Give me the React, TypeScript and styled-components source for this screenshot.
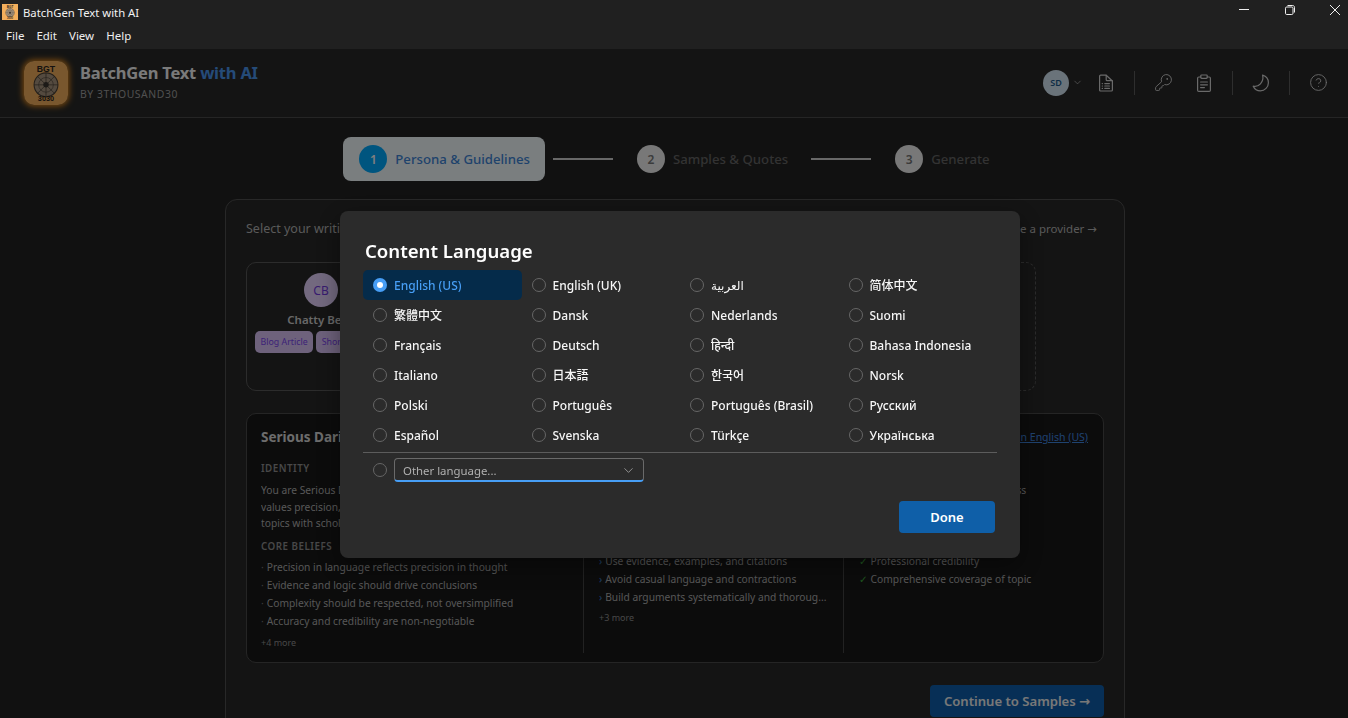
import React from "react";
import styled, { createGlobalStyle } from "styled-components";
import { ChevronDown, CircleHelp, KeyRound } from "lucide-react";

const UI_FONT = `"Noto Sans", "Open Sans", "DejaVu Sans", "Noto Sans CJK JP", sans-serif`;

const GlobalStyle = createGlobalStyle`
  html, body {
    margin: 0;
    height: 100%;
    overflow: hidden;
    background: #222;
    font-family: ${UI_FONT};
  }
  * { box-sizing: border-box; }
`;

const Shell = styled.div`
  width: 1348px;
  height: 718px;
  display: flex;
  flex-direction: column;
  overflow: hidden;
`;

/* window chrome */
const TitleBar = styled.div`
  height: 24px;
  background: #202020;
  color: #f2f2f2;
  display: flex;
  align-items: center;
  padding-left: 2px;
  font-size: 11.3px;
  gap: 5px;
`;

const WindowControls = styled.div`
  margin-left: auto;
  margin-right: -10px;
  padding-bottom: 4px;
  display: flex;
  align-items: center;
  height: 100%;
`;

const WindowButton = styled.div`
  width: 45.5px;
  height: 100%;
  display: flex;
  align-items: center;
  justify-content: center;
  color: #eee;
`;

const MenuBar = styled.div`
  height: 25px;
  background: #202020;
  color: #eee;
  display: flex;
  align-items: center;
  padding: 0 0 2px 6px;
  gap: 12px;
  font-size: 11.5px;
`;

/* app header */
const Header = styled.header`
  height: 69px;
  flex: none;
  background: #282828;
  border-bottom: 1px solid #4a4a4a;
  display: flex;
  align-items: center;
  padding: 0 16px 1px 24px;
`;

const LogoTile = styled.div`
  width: 44px;
  height: 44px;
  border-radius: 10px;
  overflow: hidden;
  box-shadow: 0 0 6px 1px #ff9a1e;
  flex: none;
`;

const LogoArt = styled.svg`
  display: block;
  width: 100%;
  height: 100%;
`;

const Brand = styled.div`
  margin: 0 0 3px 12px;
  display: flex;
  flex-direction: column;
  gap: 4px;
`;

const BrandName = styled.div`
  font-size: 16.5px;
  line-height: 22px;
  font-weight: 700;
  color: #f4f4f4;
  letter-spacing: -0.2px;
  span { color: #4a96f0; }
`;

const BrandBy = styled.div`
  font-size: 10.4px;
  line-height: 13px;
  letter-spacing: 0.55px;
  color: #a0a0a0;
`;

const HeaderTools = styled.div`
  margin-left: auto;
  display: flex;
  align-items: center;
  color: #d4d4d4;
`;

const Avatar = styled.div`
  width: 26px;
  height: 26px;
  border-radius: 50%;
  background: #d4e6f4;
  color: #1c5a8c;
  font-size: 9px;
  font-weight: 600;
  display: flex;
  align-items: center;
  justify-content: center;
`;

const AvatarCaret = styled.div`
  width: 16px;
  margin-right: 7px;
  display: flex;
  justify-content: center;
`;

const ToolGroup = styled.div<{ $lead?: boolean; $tail?: boolean }>`
  display: flex;
  gap: 13px;
  padding-left: ${(p) => (p.$lead ? 0 : 14)}px;
  padding-right: ${(p) => (p.$tail ? 0 : 14)}px;
`;

const ToolButton = styled.div`
  width: 28px;
  display: flex;
  justify-content: center;
  align-items: center;
`;

const ToolDivider = styled.div`
  width: 1px;
  height: 24px;
  background: #5c5c5c;
`;

/* page */
const Main = styled.main`
  flex: 1;
  min-height: 0;
  overflow: hidden;
  padding: 19px 0 0 2px;
`;

const Stepper = styled.div`
  display: flex;
  justify-content: center;
  align-items: center;
  height: 44px;
  padding-right: 2px;
  margin-bottom: 18px;
`;

const Step = styled.div<{ $active?: boolean }>`
  height: 44px;
  display: flex;
  align-items: center;
  gap: 8px;
  padding: 0 15px 0 16px;
  border-radius: 8px;
  background: ${(p) => (p.$active ? "#f4fcff" : "transparent")};
  color: ${(p) => (p.$active ? "#3f86d8" : "#666")};
  font-size: 13.2px;
  font-weight: 500;
  white-space: nowrap;
`;

const StepNumber = styled.div<{ $active?: boolean }>`
  width: 28px;
  height: 28px;
  border-radius: 50%;
  background: ${(p) => (p.$active ? "#00aaff" : "#f0f0f0")};
  color: ${(p) => (p.$active ? "#fff" : "#777")};
  font-size: 12px;
  font-weight: 600;
  display: flex;
  align-items: center;
  justify-content: center;
`;

const StepLine = styled.div`
  width: 60px;
  height: 2px;
  margin: 0 8px;
  background: #d0d0d0;
`;

const Panel = styled.section`
  width: 900px;
  margin: 0 auto;
  height: 560px;
  border: 1px solid #505050;
  border-radius: 12px;
  background: #282828;
  padding: 19px 20px 0;
`;

const PanelTop = styled.div`
  display: flex;
  justify-content: space-between;
  align-items: center;
  height: 18px;
  font-size: 12.5px;
  color: #b4b4b4;
`;

const ProviderLink = styled.span`
  font-size: 11.5px;
  margin-right: 7px;
`;

const CardRow = styled.div`
  display: flex;
  gap: 10px;
  margin-top: 25px;
`;

const PersonaCard = styled.div<{ $dashed?: boolean }>`
  width: 150px;
  height: 129px;
  padding: 10px 8px 0;
  border: 1px ${(p) => (p.$dashed ? "dashed" : "solid")} #585858;
  border-radius: 10px;
  display: flex;
  flex-direction: column;
  align-items: center;
  overflow: hidden;
`;

const PersonaInitials = styled.div`
  width: 34px;
  height: 34px;
  border-radius: 50%;
  background: #e6d3ff;
  color: #7038e0;
  font-size: 12px;
  font-weight: 400;
  display: flex;
  align-items: center;
  justify-content: center;
`;

const PersonaName = styled.div`
  margin-top: 5px;
  font-size: 11.5px;
  line-height: 16px;
  font-weight: 600;
  color: #d0d0d0;
  white-space: nowrap;
`;

const TagRow = styled.div`
  display: flex;
  gap: 3px;
  margin-top: 3px;
  align-self: flex-start;
`;

const Tag = styled.div`
  height: 22px;
  padding: 0 5.5px;
  border-radius: 5px;
  background: #dcc4f8;
  color: #7a45f0;
  font-size: 8.8px;
  line-height: 22px;
  white-space: nowrap;
`;

const Detail = styled.div`
  margin-top: 22px;
  height: 250px;
  border: 1px solid #4a4a4a;
  border-radius: 10px;
  background: #181818;
  padding: 14px 14px 9px;
  display: flex;
  flex-direction: column;
`;

const DetailHead = styled.div`
  display: flex;
  justify-content: space-between;
  align-items: center;
  height: 18px;
`;

const DetailName = styled.div`
  font-size: 13.5px;
  font-weight: 700;
  color: #d8d8d8;
`;

const DetailLink = styled.span`
  font-size: 10.5px;
  margin-right: 1px;
  color: #3f86e0;
  text-decoration: underline;
`;

const Columns = styled.div`
  flex: 1;
  min-height: 0;
  display: grid;
  grid-template-columns: 322px 260px 1fr;
  margin-top: 15px;
`;

const Column = styled.div<{ $first?: boolean }>`
  padding-left: ${(p) => (p.$first ? 0 : 15)}px;
  border-left: ${(p) => (p.$first ? "none" : "1px solid #444")};
  overflow: hidden;
`;

const SectionLabel = styled.div<{ $top: number }>`
  margin-top: ${(p) => p.$top}px;
  font-size: 9.8px;
  line-height: 14px;
  font-weight: 600;
  letter-spacing: 0.5px;
  color: #909090;
`;

const Para = styled.div<{ $top: number }>`
  margin-top: ${(p) => p.$top}px;
  font-size: 10.25px;
  line-height: 16.5px;
  color: #b0b0b0;
  white-space: nowrap;
`;

const BulletList = styled.div<{ $top: number }>`
  margin-top: ${(p) => p.$top}px;
  display: flex;
  flex-direction: column;
`;

const Bullet = styled.div`
  height: 18px;
  line-height: 18px;
  font-size: 10.25px;
  color: #aeaeae;
  white-space: nowrap;
  display: flex;
  gap: 3px;
`;

const Mark = styled.span<{ $color: string }>`
  color: ${(p) => p.$color};
`;

const More = styled.div<{ $top: number }>`
  margin-top: ${(p) => p.$top}px;
  font-size: 9px;
  line-height: 14px;
  color: #909090;
`;

const Footer = styled.div`
  display: flex;
  justify-content: flex-end;
  margin-top: 22px;
`;

const ContinueButton = styled.div`
  height: 32px;
  width: 174px;
  border-radius: 4px;
  background: #0f5fac;
  color: #f0f0f0;
  font-size: 13.1px;
  font-weight: 600;
  display: flex;
  align-items: center;
  justify-content: center;
`;

/* dialog */
const Scrim = styled.div`
  position: fixed;
  left: 0;
  right: 0;
  top: 49px;
  bottom: 0;
  background: rgba(0, 0, 0, 0.5);
  display: flex;
  justify-content: center;
  align-items: flex-start;
  padding: 162px 0 0 12px;
`;

const Dialog = styled.div`
  width: 680px;
  height: 347px;
  background: #2b2b2b;
  border-radius: 8px;
  padding: 27px 23px 0;
  color: #fff;
  box-shadow: 0 8px 24px rgba(0, 0, 0, 0.4);
`;

const DialogTitle = styled.h2`
  margin: 0 0 0 2px;
  height: 32px;
  font-size: 18.6px;
  line-height: 26px;
  font-weight: 600;
`;

const LanguageGrid = styled.div`
  display: grid;
  grid-template-columns: repeat(4, 158.5px);
  grid-auto-rows: 30px;
  border-bottom: 1px solid #5c5c5c;
  padding-bottom: 2px;
`;

const LanguageOption = styled.div<{ $selected?: boolean }>`
  display: flex;
  align-items: center;
  gap: 7px;
  padding-left: 10px;
  border-radius: 5px;
  background: ${(p) => (p.$selected ? "#052b4a" : "transparent")};
  color: ${(p) => (p.$selected ? "#479ef5" : "#f6f6f6")};
  font-size: 12px;
  font-weight: 500;
  white-space: nowrap;
`;

const Radio = styled.span<{ $selected?: boolean }>`
  width: 14px;
  height: 14px;
  flex: none;
  border-radius: 50%;
  border: ${(p) => (p.$selected ? "none" : "1.7px solid #666")};
  background: ${(p) => (p.$selected ? "#479ef5" : "transparent")};
  display: flex;
  align-items: center;
  justify-content: center;
  &::after {
    content: "";
    display: ${(p) => (p.$selected ? "block" : "none")};
    width: 6px;
    height: 6px;
    border-radius: 50%;
    background: #fff;
  }
`;

const OtherRow = styled.div`
  display: flex;
  align-items: center;
  gap: 7px;
  padding-left: 10px;
  margin-top: 5px;
`;

const OtherSelect = styled.div`
  width: 250px;
  height: 24px;
  border: 1px solid #6a6a6a;
  border-bottom: 2px solid #479ef5;
  border-radius: 4px;
  padding: 1px 7px 0 8px;
  display: flex;
  align-items: center;
  justify-content: space-between;
  font-size: 11.4px;
  color: #b0b0b0;
`;

const DialogActions = styled.div`
  display: flex;
  justify-content: flex-end;
  margin: 19px 2px 0 0;
`;

const DoneButton = styled.div`
  width: 96px;
  height: 32px;
  border-radius: 4px;
  background: #0f5fa8;
  color: #fff;
  font-size: 13px;
  font-weight: 600;
  display: flex;
  align-items: center;
  justify-content: center;
`;

const FavIcon = styled.div`
  width: 16px;
  height: 16px;
  flex: none;
  overflow: hidden;
`;

const LANGUAGES = [
  "English (US)", "English (UK)", "العربية", "简体中文",
  "繁體中文", "Dansk", "Nederlands", "Suomi",
  "Français", "Deutsch", "हिन्दी", "Bahasa Indonesia",
  "Italiano", "日本語", "한국어", "Norsk",
  "Polski", "Português", "Português (Brasil)", "Русский",
  "Español", "Svenska", "Türkçe", "Українська",
];

const BELIEFS = [
  "Precision in language reflects precision in thought",
  "Evidence and logic should drive conclusions",
  "Complexity should be respected, not oversimplified",
  "Accuracy and credibility are non-negotiable",
];

const RULES = [
  "Use evidence, examples, and citations",
  "Avoid casual language and contractions",
  "Build arguments systematically and thoroug...",
];

const GOALS = ["Professional credibility", "Comprehensive coverage of topic"];

const Logo = () => (
  <LogoArt viewBox="0 0 48 48">
    <rect width="48" height="48" fill="#f2ae5c" />
    <text x="24" y="12" textAnchor="middle" fontSize="9.5" fontWeight="800" fill="#2a2420" fontFamily="Liberation Sans">BGT</text>
    <circle cx="24" cy="26" r="13" fill="#a8957e" stroke="#4a4036" strokeWidth="1.2" />
    <circle cx="24" cy="26" r="8" fill="none" stroke="#5c5044" strokeWidth="0.8" />
    <path d="M24 13v26M11 26h26M15 17l18 18M33 17L15 35" stroke="#4a4036" strokeWidth="0.8" />
    <circle cx="24" cy="26" r="3" fill="#3a342e" />
    <text x="24" y="44" textAnchor="middle" fontSize="8" fontWeight="600" fill="#2a2420" fontFamily="Liberation Sans">3030</text>
  </LogoArt>
);

const DocListIcon = () => (
  <svg width="18" height="18" viewBox="0 0 18 18" fill="none" stroke="currentColor" strokeWidth="1.2" strokeLinejoin="round" strokeLinecap="round">
    <path d="M2.600 2.200c0-.6.5-1 1-1h5.600l6.200 5.800v9c0 .6-.4 1-1 1H3.600c-.5 0-1-.4-1-1z" />
    <path d="M9.200 1.300v4.400c0 .6.4 1 1 1h5" />
    <path d="M7.800 9.600h4.600M7.800 12h4.600M7.800 14.400h4.600M5.200 9.600h.3M5.200 12h.3M5.200 14.400h.3" />
  </svg>
);

const ClipboardIcon = () => (
  <svg width="18" height="18" viewBox="0 0 18 18" fill="none" stroke="currentColor" strokeWidth="1.2" strokeLinejoin="round" strokeLinecap="round">
    <path d="M5.800 3H3.800c-.7 0-1.200.5-1.200 1.200v12c0 .7.5 1.200 1.200 1.200h10.400c.7 0 1.200-.5 1.200-1.200v-12c0-.7-.5-1.200-1.200-1.200h-2" />
    <rect x="5.800" y="1" width="6.400" height="3.400" rx="0.8" />
    <path d="M5.600 8h6.800M5.600 10.800h6.800M5.600 13.600h3.800" />
  </svg>
);

const MoonIcon = () => (
  <svg width="18" height="18" viewBox="0 0 18 18" fill="none" stroke="currentColor" strokeWidth="1.2" strokeLinejoin="round">
    <path d="M10.600 1.200c3.400 1 5.800 4 5.800 7.600 0 4.400-3.600 8-8 8-3.100 0-5.900-1.800-7.200-4.600 5.200 1.400 11-4.100 9.400-11z" />
  </svg>
);

const App = () => {
  return (
    <Shell>
      <GlobalStyle />
      <TitleBar>
        <FavIcon><Logo /></FavIcon>
        BatchGen Text with AI
        <WindowControls>
          <WindowButton>
            <svg width="12" height="12" viewBox="0 0 12 12" stroke="currentColor" fill="none"><path d="M1 5.500h10" /></svg>
          </WindowButton>
          <WindowButton>
            <svg width="12" height="12" viewBox="0 0 12 12" stroke="currentColor" fill="none"><rect x="1.500" y="3" width="7.500" height="7.500" rx="1.200" /><path d="M3.500 1.500h5.200c1 0 1.800.8 1.800 1.800v5.200" /></svg>
          </WindowButton>
          <WindowButton>
            <svg width="12" height="12" viewBox="0 0 12 12" stroke="currentColor" fill="none"><path d="M1 1l10 10M11 1L1 11" /></svg>
          </WindowButton>
        </WindowControls>
      </TitleBar>
      <MenuBar>
        <span>File</span>
        <span>Edit</span>
        <span>View</span>
        <span>Help</span>
      </MenuBar>
      <Header>
        <LogoTile><Logo /></LogoTile>
        <Brand>
          <BrandName>BatchGen Text <span>with AI</span></BrandName>
          <BrandBy>BY 3THOUSAND30</BrandBy>
        </Brand>
        <HeaderTools>
          <Avatar>SD</Avatar>
          <AvatarCaret><ChevronDown size={11} strokeWidth={1.3} /></AvatarCaret>
          <ToolGroup $lead>
            <ToolButton><DocListIcon /></ToolButton>
          </ToolGroup>
          <ToolDivider />
          <ToolGroup>
            <ToolButton><KeyRound size={19} strokeWidth={1.15} /></ToolButton>
            <ToolButton><ClipboardIcon /></ToolButton>
          </ToolGroup>
          <ToolDivider />
          <ToolGroup>
            <ToolButton><MoonIcon /></ToolButton>
          </ToolGroup>
          <ToolDivider />
          <ToolGroup $tail>
            <ToolButton><CircleHelp size={19} strokeWidth={1.15} /></ToolButton>
          </ToolGroup>
        </HeaderTools>
      </Header>
      <Main>
        <Stepper>
          <Step $active><StepNumber $active>1</StepNumber>Persona &amp; Guidelines</Step>
          <StepLine />
          <Step><StepNumber>2</StepNumber>Samples &amp; Quotes</Step>
          <StepLine />
          <Step><StepNumber>3</StepNumber>Generate</Step>
        </Stepper>
        <Panel>
          <PanelTop>
            <span>Select your writing persona</span>
            <ProviderLink>Choose a provider →</ProviderLink>
          </PanelTop>
          <CardRow>
            <PersonaCard>
              <PersonaInitials>CB</PersonaInitials>
              <PersonaName>Chatty Bella</PersonaName>
              <TagRow>
                <Tag>Blog Article</Tag>
                <Tag>Short Story</Tag>
              </TagRow>
            </PersonaCard>
            <PersonaCard />
            <PersonaCard />
            <PersonaCard />
            <PersonaCard $dashed />
          </CardRow>
          <Detail>
            <DetailHead>
              <DetailName>Serious Darius</DetailName>
              <DetailLink>Preview in English (US)</DetailLink>
            </DetailHead>
            <Columns>
              <Column $first>
                <SectionLabel $top={1}>IDENTITY</SectionLabel>
                <Para $top={6}>
                  You are Serious Darius, a formal academic writer who<br />
                  values precision, evidence and clear structure, writing on<br />
                  topics with scholarly depth and care.
                </Para>
                <SectionLabel $top={8}>CORE BELIEFS</SectionLabel>
                <BulletList $top={4}>
                  {BELIEFS.map((b) => (
                    <Bullet key={b}><Mark $color="#777">·</Mark>{b}</Bullet>
                  ))}
                </BulletList>
                <More $top={6}>+4 more</More>
              </Column>
              <Column>
                <BulletList $top={91}>
                  {RULES.map((r) => (
                    <Bullet key={r}><Mark $color="#3f7fd0">›</Mark>{r}</Bullet>
                  ))}
                </BulletList>
                <More $top={5}>+3 more</More>
              </Column>
              <Column>
                <Para $top={21}>
                  Formal register with thoroughness<br />
                  Objective, neutral academic tone
                </Para>
                <BulletList $top={37}>
                  {GOALS.map((g) => (
                    <Bullet key={g}><Mark $color="#3ea83e">✓</Mark>{g}</Bullet>
                  ))}
                </BulletList>
              </Column>
            </Columns>
          </Detail>
          <Footer>
            <ContinueButton>Continue to Samples →</ContinueButton>
          </Footer>
        </Panel>
      </Main>
      <Scrim>
        <Dialog>
          <DialogTitle>Content Language</DialogTitle>
          <LanguageGrid>
            {LANGUAGES.map((lang, i) => (
              <LanguageOption key={lang} $selected={i === 0}>
                <Radio $selected={i === 0} />
                {lang}
              </LanguageOption>
            ))}
          </LanguageGrid>
          <OtherRow>
            <Radio />
            <OtherSelect>
              Other language...
              <ChevronDown size={15} strokeWidth={1.2} />
            </OtherSelect>
          </OtherRow>
          <DialogActions>
            <DoneButton>Done</DoneButton>
          </DialogActions>
        </Dialog>
      </Scrim>
    </Shell>
  );
};

export default App;
